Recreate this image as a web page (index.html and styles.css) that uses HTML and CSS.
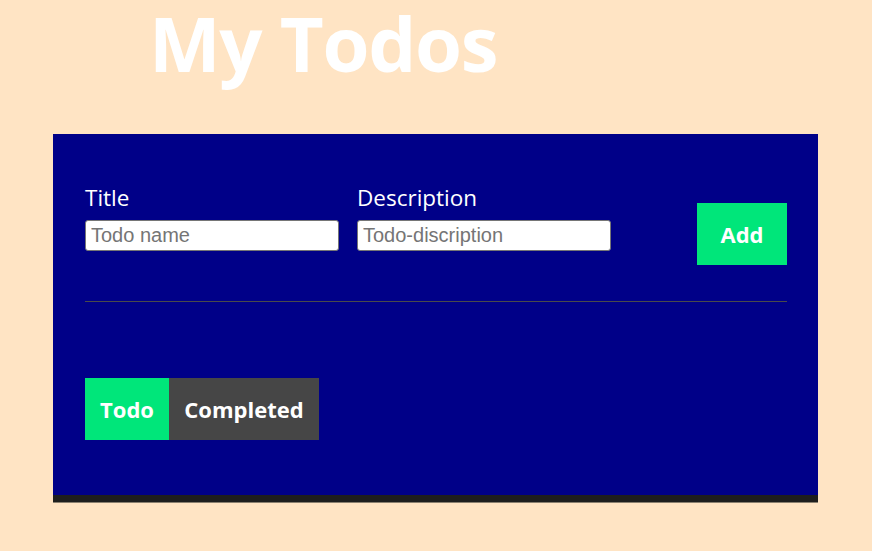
FILE: index.html
```html
<!DOCTYPE html>
<html>
<head>
<meta charset="utf-8">
<link rel="stylesheet" href="styles.css">
</head>
<body>
<h1 class="title">My Todos</h1>
<div class="card">
  <div class="form-row">
    <div class="field">
      <label class="label">Title</label>
      <input class="input" type="text" placeholder="Todo name">
    </div>
    <div class="field">
      <label class="label">Description</label>
      <input class="input" type="text" placeholder="Todo-discription">
    </div>
    <button class="add-btn">Add</button>
  </div>
  <hr class="divider">
  <div class="tabs">
    <button class="tab tab-active">Todo</button>
    <button class="tab tab-inactive">Completed</button>
  </div>
</div>
</body>
</html>
```

FILE: styles.css
```css
html, body {
  margin: 0;
  padding: 0;
}
body {
  background: #ffe4c4;
  font-family: "Open Sans", "Noto Sans", sans-serif;
  width: 872px;
  height: 551px;
  overflow: hidden;
}
.title {
  margin: 0;
  padding: 3px 0 0 149px;
  height: 134px;
  box-sizing: border-box;
  color: #ffffff;
  font-size: 76px;
  font-weight: 700;
  line-height: 80px;
  letter-spacing: -1.3px;
}
.card {
  margin-left: 53px;
  width: 765px;
  height: 361px;
  box-sizing: border-box;
  background: #000088;
  padding: 50px 31px 0 32px;
  box-shadow: 0 7px 0 #1e1e1e, 0 8px 0 #8a8070;
}
.form-row {
  display: flex;
  align-items: flex-end;
}
.field {
  display: flex;
  flex-direction: column;
  margin-right: 18px;
}
.label {
  color: #ffffff;
  font-size: 22.5px;
  line-height: 28px;
  margin-bottom: 8px;
}
.input {
  width: 254px;
  height: 31px;
  box-sizing: border-box;
  border: 1px solid #767676;
  border-radius: 3px;
  padding: 1px 5px;
  font-family: "Liberation Sans", Arial, sans-serif;
  font-size: 20px;
  color: #000;
  background: #fff;
  margin-bottom: 14px;
}
.input::placeholder {
  color: #757575;
}
.add-btn {
  margin-left: auto;
  width: 90px;
  height: 62px;
  background: #00e67a;
  color: #ffffff;
  border: none;
  font-family: "Open Sans", "Noto Sans", sans-serif;
  font-size: 22px;
  font-weight: 700;
  padding: 0;
}
.divider {
  margin: 36px 0 0 0;
  border: none;
  border-top: 1px solid #4a4a4a;
  height: 0;
}
.tabs {
  display: flex;
  margin-top: 76px;
}
.tab {
  height: 62px;
  border: none;
  color: #ffffff;
  font-family: "Open Sans", "Noto Sans", sans-serif;
  font-size: 22px;
  font-weight: 700;
  padding: 0;
}
.tab-active {
  width: 84px;
  background: #00e67a;
}
.tab-inactive {
  width: 150px;
  background: #464646;
}
```
